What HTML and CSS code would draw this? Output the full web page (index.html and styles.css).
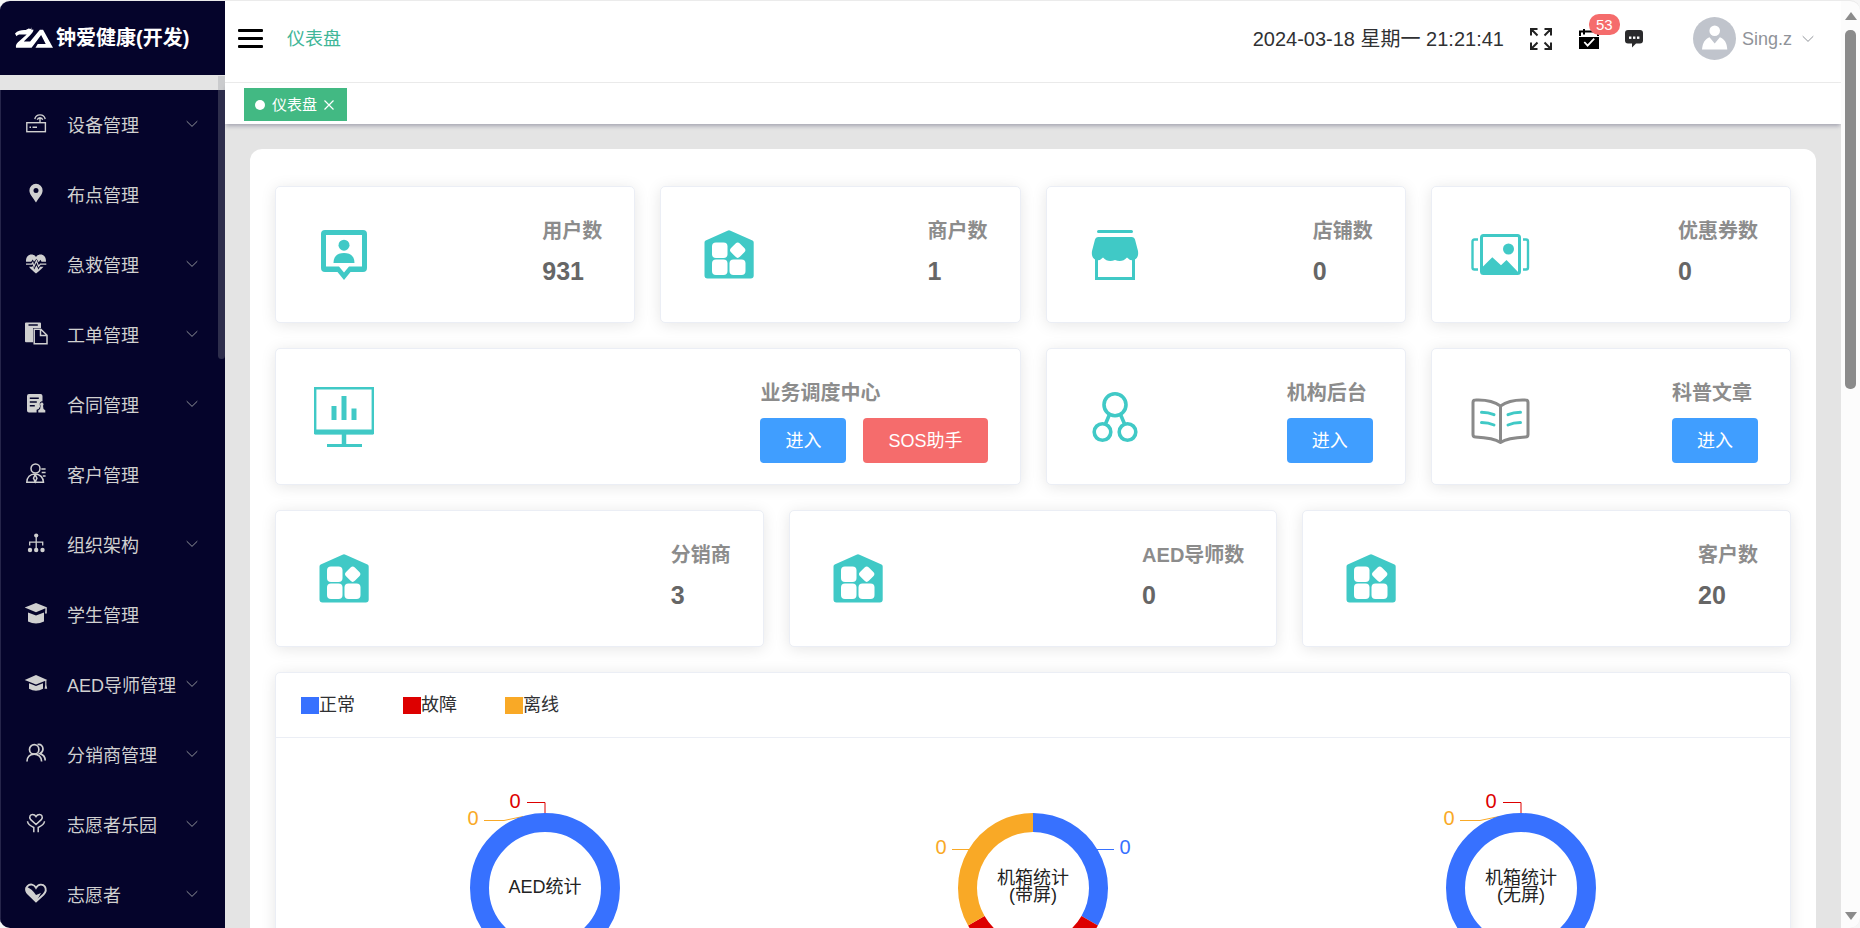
FILE: index.html
```html
<!DOCTYPE html>
<html lang="zh-CN">
<head>
<meta charset="utf-8">
<title>钟爱健康(开发)</title>
<link rel="stylesheet" href="styles.css">
</head>
<body>
<svg class="sprite" aria-hidden="true">
  <symbol id="chevron" viewBox="0 0 12 8"><path d="M.7 1.2 6 6.4l5.3-5.2" fill="none" stroke="currentColor"/></symbol>
  <symbol id="house" viewBox="0 0 60 60">
    <path fill="currentColor" d="M28.500 5.700q1.500-.8 3 0L53.500 15.500q1.200.7 1.200 2V50.500q0 3-3 3H8.500q-3 0-3-3V17.500q0-1.300 1.200-2z"/>
    <g fill="#fff"><rect x="13" y="17.500" width="15.500" height="15.500" rx="4"/><rect x="13" y="34.500" width="15.500" height="15.500" rx="4"/><rect x="30.500" y="34.500" width="16" height="15.500" rx="4"/><rect x="32.500" y="19" width="12.400" height="12.400" rx="3" transform="rotate(45 38.700 25.200)"/></g>
  </symbol>
</svg>
<div class="app">
  <aside class="sidebar">
    <a class="brand" href="#">
      <svg class="brand-logo" viewBox="0 0 40 22" aria-hidden="true"><path fill="#fff" d="M0 6.500C3 3 7 2.600 11 2.800l3-1.600 2 .6L17 0l-.4 2.200 2.400.4c-.3 2-1.500 3.600-3.500 5.600L9 14.500h6.500L25.500 2.600h3.300L39 21H21l2.300-3.800h8.200L26.800 8 17 21H1c-.6-3 1-4.800 3.500-6.800L12 7.500H5.500C3.500 7.500 2.500 8 1.500 9.200z"/></svg>
      <span>钟爱健康(开发)</span>
    </a>
    <nav class="menu">
      <a class="menu-item" href="#"><svg class="menu-icon" viewBox="0 0 22 22"><g fill="none" stroke="currentColor" stroke-width="1.400"><rect x="1.800" y="9.700" width="18.600" height="9"/><path d="M15 10V5.500M9.800 6.200a5.300 5.300 0 0 1 10.400 0M12.300 6.800a2.800 2.800 0 0 1 5.400 0"/><path d="M4.500 14.200h1.500M7.500 14.200h4.500" stroke-width="1.600"/></g></svg><span>设备管理</span><svg class="arrow"><use href="#chevron"/></svg></a>
      <a class="menu-item" href="#"><svg class="menu-icon" viewBox="0 0 22 22"><path fill="currentColor" fill-rule="evenodd" d="M11 .8a6.600 6.600 0 0 1 6.600 6.600c0 4-4 7.600-6.600 12-2.600-4.400-6.600-8-6.600-12A6.600 6.600 0 0 1 11 .8zM11 5a2.500 2.500 0 1 0 0 5 2.500 2.500 0 0 0 0-5z"/></svg><span>布点管理</span></a>
      <a class="menu-item" href="#"><svg class="menu-icon" viewBox="0 0 22 22"><path fill="currentColor" d="M1 8.800C.8 4.500 3 1.500 6.300 1.500c2 0 3.500.8 4.700 2.400 1.200-1.600 2.700-2.400 4.700-2.400 3.300 0 5.500 3 5.300 7.300h-4.500l-1-2-1.800 2.400-2.200-3.500L9 8.700 7.700 6.600 6.200 8.800zM4 13.700h3l1-.6 1.200 3.300 2.300-4.200 2 4.200 1.500-2.700H18.500C16.500 16 13.500 18.500 11 20.500 8.500 18.500 6 16.300 4 13.700z"/><path fill="none" stroke="currentColor" stroke-width="1.200" d="M1 11.200h5.800l1-1.500L9 13.500l2.400-5.700 2.200 5.500L15.400 11.200H21.300"/></svg><span>急救管理</span><svg class="arrow"><use href="#chevron"/></svg></a>
      <a class="menu-item" href="#"><svg class="menu-icon" viewBox="0 0 22 22"><path fill="currentColor" fill-rule="evenodd" d="M1-.5h14q1 0 1 1V5H8v14.200H1q-1 0-1-1V.5q0-1 1-1zM3.500 1.300v1.400h9.300V1.300z"/><path fill="none" stroke="currentColor" stroke-width="1.500" d="M9.200 6.200h6.600l6.200 6v8.600H9.200zM15.500 6.500v6H22"/></svg><span>工单管理</span><svg class="arrow"><use href="#chevron"/></svg></a>
      <a class="menu-item" href="#"><svg class="menu-icon" viewBox="0 0 22 22"><path fill="currentColor" fill-rule="evenodd" d="M4 1h11.500q2 0 2 2v5.200q-3.300.3-2.700 3.800l.3 1.500-1.500 2.500-2 .8V19.500H4q-2 0-2-2V3q0-2 2-2zM4.800 4.500v1.400h9V4.500zM4.800 8.300v1.400h7V8.300zM4.800 12v1.400h5V12z"/><path fill="currentColor" d="M16.800 9.500a1.900 1.900 0 0 1 1.200 3.200l.5 3.200 1.800 1.300v2.300h-7v-2.300l1.800-1.300.5-3.200a1.900 1.900 0 0 1 1.200-3.200z"/></svg><span>合同管理</span><svg class="arrow"><use href="#chevron"/></svg></a>
      <a class="menu-item" href="#"><svg class="menu-icon" viewBox="0 0 22 22"><g fill="none" stroke="currentColor" stroke-width="1.500"><circle cx="10.500" cy="5.500" r="4.500"/><path d="M1.800 19.300C2 14.500 5 11 10 11s8.300 3.500 8.500 8.300zM10.200 11.500l-1.700 3.700 1.700 3.700 1.700-3.700zM16.300 6h4.300M16.700 9.500h3.900M17.800 13h2.800"/></g></svg><span>客户管理</span></a>
      <a class="menu-item" href="#"><svg class="menu-icon" viewBox="0 0 22 22"><g fill="currentColor"><circle cx="11.200" cy="2.500" r="2.100"/><circle cx="5" cy="17" r="2.200"/><circle cx="11.200" cy="17" r="2.200"/><circle cx="17.500" cy="17" r="2.200"/></g><path fill="none" stroke="currentColor" stroke-width="1.300" d="M11.200 3v12M4.700 12.500V9.200h13v3.300"/></svg><span>组织架构</span><svg class="arrow"><use href="#chevron"/></svg></a>
      <a class="menu-item" href="#"><svg class="menu-icon" viewBox="0 0 22 22"><path fill="currentColor" d="M11 0 22.300 4.600 11 9.200-.3 4.600zM3 9.500l8 3 8-3v9q-8 4-16 0zM20.500 5h1.300v5.500h-1.800z"/></svg><span>学生管理</span></a>
      <a class="menu-item" href="#"><svg class="menu-icon" viewBox="0 0 22 22"><path fill="currentColor" d="M11 2 22.300 7 11 11.500-.3 7zM4 10.300l7 2.800 7-2.800v5.500q-7 4-14 0zM20.200 7h1.200v5l.8 3.700h-2.600l.6-3.700z"/></svg><span>AED导师管理</span><svg class="arrow"><use href="#chevron"/></svg></a>
      <a class="menu-item" href="#"><svg class="menu-icon" viewBox="0 0 22 22"><g fill="none" stroke="currentColor" stroke-width="1.700"><circle cx="9.200" cy="6.400" r="4.700"/><path d="M2 18.500c0-4.500 3-7.400 7.200-7.400s7.400 2.900 7.400 7.400M12.500 1.600c3.200-1 5.500 1.500 5.500 4.400 0 2.400-1.400 3.700-3 4.600 3.200 1 5.200 3.900 5.200 7"/></g></svg><span>分销商管理</span><svg class="arrow"><use href="#chevron"/></svg></a>
      <a class="menu-item" href="#"><svg class="menu-icon" viewBox="0 0 22 22"><g fill="none" stroke="currentColor" stroke-width="1.500"><path d="M11 11.500 5.500 6.400C3.700 3.500 5.500 1.500 7.500 1.500c1.500 0 2.700.7 3.500 2 .8-1.300 2-2 3.500-2 2 0 3.800 2 2 4.900z"/><path d="M2.500 8.300c.3 3.200 2.500 4.500 6.300 6.200v4.800M19.500 8.300c-.3 3.200-2.500 4.500-6.300 6.200v4.800"/></g></svg><span>志愿者乐园</span><svg class="arrow"><use href="#chevron"/></svg></a>
      <a class="menu-item" href="#"><svg class="menu-icon" viewBox="0 0 22 22"><path fill="none" stroke="currentColor" stroke-width="1.900" d="M11 4.800C13.500.5 18 1 19.800 3.500c2 3.200.6 6-1.300 8L11 18.500 2.500 10C.8 8 .8 5 2.500 3.200 5 .5 9 1.200 11 4.800z"/><path fill="currentColor" d="M1 3.500C5 5 8.500 8 11 12l5-2-5 9L1.500 10Q-.5 6.500 1 3.500z"/></svg><span>志愿者</span><svg class="arrow"><use href="#chevron"/></svg></a>
      <i class="menu-thumb"></i>
    </nav>
  </aside>

  <div class="main">
    <header class="topbar">
      <button class="toggle" aria-label="折叠菜单"><i></i><i></i><i></i></button>
      <a class="crumb" href="#">仪表盘</a>
      <div class="tools">
        <time class="clock">2024-03-18 星期一 21:21:41</time>
        <button class="tool full" aria-label="全屏"><svg width="24" height="24" viewBox="0 0 24 24"><g fill="none" stroke="#222" stroke-width="2"><path d="M2 8.500V2h6.500M2.300 2.300l6.200 6.200M15.500 2H22v6.500M21.700 2.300l-6.200 6.200M2 15.500V22h6.500M2.300 21.700l6.200-6.200M15.500 22H22v-6.500M21.700 21.700l-6.200-6.200"/></g></svg></button>
        <button class="tool todo" aria-label="待办"><svg width="20" height="21" viewBox="0 0 20 21"><path d="M0 9h20v12H0z"/><path fill="none" stroke="#000" stroke-width="2" d="M1 8V3.500h18V8M5 1v5.500"/><path fill="none" stroke="#fff" stroke-width="1.800" d="m5.300 14 3.300 3.600 6.600-7"/></svg><span class="badge">53</span></button>
        <button class="tool" aria-label="消息"><svg width="18" height="18" viewBox="0 0 18 18"><path fill="#2a2a2c" d="M3 0h12q3 0 3 3v7.500q0 3-3 3h-4L7 17.500v-4H3q-3 0-3-3V3q0-3 3-3z"/><g fill="#fff"><rect x="4" y="6.500" width="2.400" height="2.400"/><rect x="8" y="6.500" width="2.400" height="2.400"/><rect x="12" y="6.500" width="2.400" height="2.400"/></g></svg></button>
        <button class="user"><svg width="43" height="43" viewBox="0 0 43 43" aria-hidden="true"><circle cx="21.500" cy="21.500" r="21.500" fill="#c0c4cc"/><circle cx="21.700" cy="13.800" r="5.300" fill="#fff"/><path fill="#fff" d="M9 32.500C9.500 26 12 22 16.500 20.300L21.700 26.500l5.200-6.200C31.500 22 34 26 34.300 32.500z"/></svg><span>Sing.z</span><svg class="arrow"><use href="#chevron"/></svg></button>
      </div>
    </header>
    <div class="tabs"><a class="tab" href="#"><i class="dot"></i><span>仪表盘</span><svg width="10" height="10" viewBox="0 0 10 10"><path d="M.5.5l9 9M9.500.5l-9 9" stroke="#fff" stroke-width="1.200"/></svg></a></div>

    <main class="content">
      <section class="panel">
        <div class="grid four">
          <article class="card stat"><svg class="stat-icon" viewBox="0 0 60 60"><path fill="currentColor" fill-rule="evenodd" d="M11 5h38q4 0 4 4v34q0 4-4 4H36.500L30 55l-6.500-8H11q-4 0-4-4V9q0-4 4-4zM12 10v31.500h13l5 6 5-6H48V10z"/><circle cx="30" cy="20.200" r="5.500" fill="currentColor"/><path fill="currentColor" d="M19.500 38c0-6 3-10 10.500-10s10.500 4 10.500 10z"/></svg><div><h3>用户数</h3><strong>931</strong></div></article>
          <article class="card stat"><svg class="stat-icon"><use href="#house"/></svg><div><h3>商户数</h3><strong>1</strong></div></article>
          <article class="card stat"><svg class="stat-icon" viewBox="0 0 60 60"><path fill="currentColor" d="M13.500 5h33q1.500 0 1.500 1.500T46.500 8h-33Q12 8 12 6.500T13.500 5zM13 12h34q2.500 0 3 2.500L53 26q1 7-4 9-4 1-7-2.500Q37 38 30 35 q-7 3-12-2.500Q15 36 11 35 6 33 7 26l3-11.500Q10.500 12 13 12z"/><path fill="none" stroke="currentColor" stroke-width="3" d="M11.500 34v19.500h37V34"/></svg><div><h3>店铺数</h3><strong>0</strong></div></article>
          <article class="card stat"><svg class="stat-icon" viewBox="0 0 60 60"><g fill="none" stroke="currentColor" stroke-width="3"><rect x="11.500" y="10.500" width="38" height="38" rx="2"/><path d="M8 14.500H4.500q-2 0-2 2v26q0 2 2 2H8M53 14.500h3q2 0 2 2v26q0 2-2 2h-3" stroke-width="2.400"/></g><circle cx="38.500" cy="24" r="5.500" fill="currentColor"/><path fill="currentColor" d="M12 42.500l10.300-10.300 8.700 8 5.500-5.200L49 48v1H12z"/></svg><div><h3>优惠券数</h3><strong>0</strong></div></article>
          <article class="card stat wide"><svg class="stat-icon" viewBox="0 0 60 60"><g fill="none" stroke="currentColor"><path stroke-width="2.400" d="M1.200 1.200h57.600V46H1.200z"/><path stroke-width="5" d="M1 45h58M20 19v14M30 9v24M40 21.500V33"/><path stroke-width="4.500" d="M30 46v13"/><path stroke-width="3" d="M13 58.500h35"/></g></svg><div><h3>业务调度中心</h3><p class="actions"><button class="btn">进入</button><button class="btn danger">SOS助手</button></p></div></article>
          <article class="card stat"><svg class="stat-icon" viewBox="0 0 60 60"><g fill="none" stroke="currentColor" stroke-width="3.600"><circle cx="30" cy="17.800" r="11"/><circle cx="17.500" cy="45" r="8.300"/><circle cx="42.500" cy="45" r="8.300"/><path d="M24.500 27.500 20 38M35.500 27.500 40 38"/></g></svg><div><h3>机构后台</h3><p class="actions"><button class="btn">进入</button></p></div></article>
          <article class="card stat"><svg class="stat-icon" viewBox="0 0 60 60"><path fill="none" stroke="#8a8a8a" stroke-width="3" stroke-linejoin="round" d="M30.500 19C25 15 16 12.500 5.500 13q-2.500 0-2.500 2.500V47.500q0 2.500 2.500 2.500c11 .5 19 1.500 25 5.500 6-4 14-5 25-5.500q2.500 0 2.500-2.500V15.500Q58 13 55.500 13C45 12.500 36 15 30.500 19zV55"/><path fill="none" stroke="currentColor" stroke-width="3" stroke-linecap="round" d="M11.500 25.200q7 0 12.500 2.500M11.500 35.500q7 0 12.500 2.500M50.500 25.200q-7 0-12.500 2.500M50.500 35.500q-7 0-12.500 2.500"/></svg><div><h3>科普文章</h3><p class="actions"><button class="btn">进入</button></p></div></article>
        </div>
        <div class="grid three">
          <article class="card stat"><svg class="stat-icon"><use href="#house"/></svg><div><h3>分销商</h3><strong>3</strong></div></article>
          <article class="card stat"><svg class="stat-icon"><use href="#house"/></svg><div><h3>AED导师数</h3><strong>0</strong></div></article>
          <article class="card stat"><svg class="stat-icon"><use href="#house"/></svg><div><h3>客户数</h3><strong>20</strong></div></article>
        </div>
        <section class="card charts">
          <header class="legend"><span><i class="ok"></i>正常</span><span><i class="bad"></i>故障</span><span><i class="off"></i>离线</span></header>
          <div class="pies">
            <svg class="pie" viewBox="0 0 300 300">
              <path class="line-off" d="M89 82.500h20l19-4"/><path class="line-bad" d="M132 64.500h18V78"/>
              <circle class="ring" cx="150" cy="150" r="65.500"/>
              <text class="num t-off" x="78" y="87">0</text><text class="num t-bad" x="120" y="70">0</text>
              <text x="150" y="155">AED统计</text>
            </svg>
            <svg class="pie" viewBox="0 0 300 300">
              <path class="line-off" d="M69 111.500h18"/><path class="line-ok" d="M213 111.500h18"/>
              <path class="arc ok" d="M150 84.500A65.500 65.500 0 0 1 206.700 182.800"/>
              <path class="arc bad" d="M206.700 182.800A65.500 65.500 0 0 1 93.300 182.800"/>
              <path class="arc off" d="M93.300 182.800A65.500 65.500 0 0 1 150 84.500"/>
              <text class="num t-off" x="58" y="116">0</text><text class="num t-ok" x="242" y="116">0</text>
              <text x="150" y="146">机箱统计</text><text x="150" y="163">(带屏)</text>
            </svg>
            <svg class="pie" viewBox="0 0 300 300">
              <path class="line-off" d="M89 82.500h20l19-4"/><path class="line-bad" d="M132 64.500h18V78"/>
              <circle class="ring" cx="150" cy="150" r="65.500"/>
              <text class="num t-off" x="78" y="87">0</text><text class="num t-bad" x="120" y="70">0</text>
              <text x="150" y="146">机箱统计</text><text x="150" y="163">(无屏)</text>
            </svg>
          </div>
        </section>
      </section>
    </main>
  </div>
  <div class="scrollbar" aria-hidden="true"><i class="up"></i><i class="thumb"></i><i class="down"></i></div>
</div>
</body>
</html>
```
FILE: styles.css
```css
* { box-sizing: border-box; }
body {
  margin: 0;
  background: #f6f6f6;
  color: #303133;
  font: 18px/24px "Liberation Sans", "Noto Sans CJK SC", sans-serif;
}
a { color: inherit; text-decoration: none; }
button { font: inherit; color: inherit; border: 0; padding: 0; background: none; cursor: pointer; }
h3, p { margin: 0; }
i { display: block; }
.sprite { position: absolute; width: 0; height: 0; }

.app {
  display: flex;
  height: 100vh;
  overflow: hidden;
  border-top: 1px solid #ebebeb;
  border-radius: 10px;
  background: #e4e4e4;
}

/* Sidebar */
.sidebar { flex: 0 0 225px; display: flex; flex-direction: column; gap: 15px; }
.brand {
  flex: 0 0 74px;
  display: flex;
  align-items: center;
  gap: 2px;
  padding-left: 15px;
  background: #05042b;
  color: #fff;
  font-size: 20px;
  font-weight: 700;
}
.brand-logo { width: 39px; height: 22px; }
.menu { position: relative; flex: 1; min-height: 0; background: #05042b; color: #d0d0d0; border-left: 1px solid #26254a; }
.menu-item { display: flex; align-items: center; height: 70px; padding: 2px 27px 0 24px; }
.menu-icon { flex: none; width: 22px; height: 22px; margin: 0 20px 5px 0; overflow: visible; }
.menu-item span { white-space: nowrap; }
.arrow { flex: none; width: 12px; height: 8px; margin-left: auto; color: #909399; }
.menu-item .arrow { margin-bottom: 4px; }
.menu-thumb { position: absolute; right: 0; top: -14px; width: 7px; height: 283px; border-radius: 0 0 4px 4px; background: rgba(144, 147, 153, 0.3); }

/* Header */
.main { flex: 1; min-width: 0; display: flex; flex-direction: column; }
.topbar { flex: 0 0 82px; display: flex; align-items: center; padding: 0 27px 6px 13px; background: #fff; border-bottom: 1px solid #ebebeb; }
.toggle { width: 25px; display: grid; gap: 5px; }
.toggle i { height: 3px; border-radius: 1px; background: #000; }
.crumb { margin-left: 24px; color: #3fb698; }
.tools { display: flex; align-items: center; margin-left: auto; }
.clock { font-size: 20px; white-space: nowrap; }
.tool { position: relative; display: flex; margin-right: 26px; }
.full { margin-left: 25px; }
.badge {
  position: absolute;
  left: 10px;
  top: -14px;
  height: 21px;
  padding: 0 7px;
  border-radius: 10px;
  background: #f56c6c;
  color: #fff;
  font-size: 15px;
  line-height: 21px;
}
.user { display: flex; align-items: center; gap: 6px; margin-left: 24px; color: #909399; }
.user .arrow { margin-left: 4px; }
.tabs { flex: 0 0 41px; display: flex; padding: 5px 19px 3px; background: #fff; box-shadow: 0 3px 4px -1px rgba(20, 20, 60, 0.3); }
.tab { display: flex; align-items: center; gap: 7px; padding: 0 13px 0 11px; background: #42b983; color: #fff; font-size: 15px; }
.dot { width: 10px; height: 10px; border-radius: 50%; background: #fff; }

/* Dashboard */
.content { flex: 1; min-height: 0; overflow: hidden; padding: 25px; }
.panel { display: grid; gap: 25px; padding: 37px 25px; border-radius: 12px; background: #fff; }
.grid { display: grid; gap: 25px; }
.four { grid-template-columns: repeat(4, minmax(0, 1fr)); }
.three { grid-template-columns: repeat(3, minmax(0, 1fr)); }
.wide { grid-column: span 2; }
.card { border: 1px solid #ebeef5; border-radius: 5px; background: #fff; box-shadow: 0 2px 15px rgba(0, 0, 0, 0.1); }
.stat { display: flex; justify-content: space-between; min-height: 137px; padding: 32px 32px 20px 38px; }
.stat-icon { flex: none; width: 60px; height: 60px; margin-top: 6px; color: #40c9c6; }
.stat h3 { margin-bottom: 12px; color: #8c8c8c; font-size: 20px; line-height: 25px; }
.stat strong { display: block; color: #666; font-size: 25px; line-height: 30px; }
.actions { display: flex; gap: 17px; }
.btn { height: 45px; padding: 0 25px; border-radius: 4px; background: #409eff; color: #fff; }
.danger { background: #f56c6c; }

.legend { display: flex; gap: 48px; padding: 20px 25px; border-bottom: 1px solid #ebeef5; }
.legend span { display: flex; align-items: center; }
.legend i { width: 18px; height: 17px; }
.legend .ok { background: #3771ff; }
.legend .bad { background: #d00; }
.legend .off { background: #f9a926; }
.pies { display: grid; grid-template-columns: repeat(3, minmax(0, 1fr)); justify-items: center; padding: 0 25px; }
.pie { width: 300px; height: 300px; fill: none; }
.pie text { fill: #222; text-anchor: middle; }
.pie .num { font-size: 20px; }
.pie .t-ok { fill: #3771ff; }
.pie .t-bad { fill: #d00; }
.pie .t-off { fill: #f9a926; }
.pie path { stroke-width: 1; }
.ring, .pie .arc { stroke-width: 19; }
.ring, .line-ok, .arc.ok { stroke: #3771ff; }
.line-bad, .arc.bad { stroke: #d00; }
.line-off, .arc.off { stroke: #f9a926; }

/* Page scrollbar */
.scrollbar { flex: 0 0 19px; display: flex; flex-direction: column; align-items: center; padding: 11px 0 8px; background: #fcfcfc; }
.up, .down { width: 0; border: 6px solid transparent; }
.up { border-top: 0; border-bottom: 8px solid #8b8b8b; }
.down { margin-top: auto; border-bottom: 0; border-top: 8px solid #8b8b8b; }
.thumb { width: 11px; height: 39.5%; margin-top: 10px; border-radius: 5px; background: #8b8b8b; }
```
